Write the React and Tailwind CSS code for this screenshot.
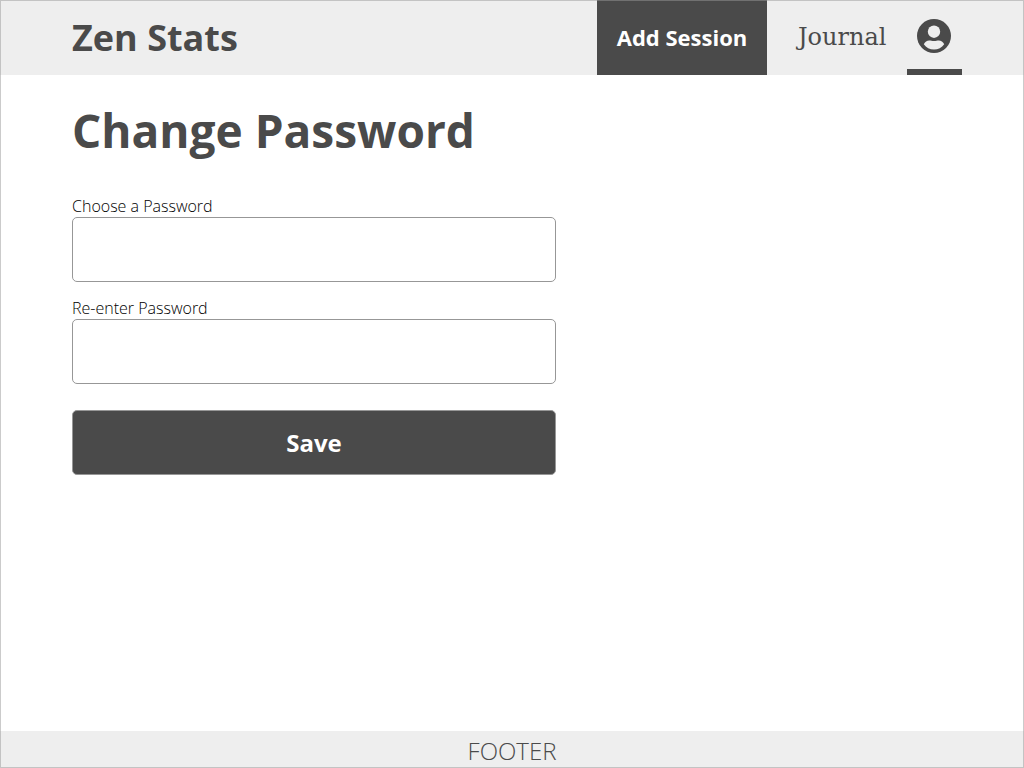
function AccountIcon() {
  return (
    <svg viewBox="0 0 34 34" className="size-[34px]" aria-hidden="true">
      <circle cx="17" cy="17" r="17" fill="#4a4a4a" />
      <circle cx="17" cy="12.7" r="6.2" fill="#eeeeee" />
      <path
        d="M6.8 25.3C7.8 22.8 10 21.4 12.2 21.4C13.8 21.4 15 22 17 22C19 22 20.2 21.4 21.8 21.4C24 21.4 26.2 22.8 27.2 25.3C24.8 28.7 21.2 30.6 17 30.6C12.8 30.6 9.2 28.7 6.8 25.3Z"
        fill="#eeeeee"
      />
    </svg>
  );
}

function Header() {
  return (
    <header className="flex h-[75px] items-stretch bg-[#eeeeee] pr-[62px] pl-[72px] text-[#4a4a4a]">
      <a href="#home" className="flex items-center text-[36px] leading-10 font-bold">
        Zen Stats
      </a>
      <nav className="ml-auto flex items-stretch">
        <a
          href="#add"
          className="flex w-[170px] items-center justify-center bg-[#4a4a4a] text-[22px] font-bold text-white"
        >
          Add Session
        </a>
        <a
          href="#journal"
          className="flex w-[140px] items-center pb-0.5 pl-[31px] font-['DejaVu_Serif',serif] text-[24px]"
        >
          Journal
        </a>
        <a
          href="#account"
          aria-label="Account"
          className="flex w-[55px] items-center justify-center border-b-6 border-[#4a4a4a] pt-0.5 pr-0.5"
        >
          <AccountIcon />
        </a>
      </nav>
    </header>
  );
}

function PasswordField({ id, label }) {
  return (
    <div className="flex flex-col">
      <label htmlFor={id} className="text-[16px] leading-[22px] font-light text-black">
        {label}
      </label>
      <input
        id={id}
        type="password"
        className="h-[65px] w-full rounded-[5px] border border-[#979797] bg-white px-4 text-2xl"
      />
    </div>
  );
}

export default function App() {
  return (
    <div className="relative flex min-h-screen flex-col bg-white font-['Open_Sans',sans-serif] text-[#4a4a4a]">
      <Header />
      <main className="flex-1 px-[72px] pt-6">
        <h1 className="text-[46px] leading-[62px] font-bold">Change Password</h1>
        <form className="mt-[34px] flex w-full max-w-[484px] flex-col gap-[15px]">
          <PasswordField id="password" label="Choose a Password" />
          <PasswordField id="confirm" label="Re-enter Password" />
          <button
            type="button"
            className="mt-[11px] h-[65px] rounded-[5px] border border-[#979797] bg-[#4a4a4a] text-[24px] font-bold text-white"
          >
            Save
          </button>
        </form>
      </main>
      <footer className="flex h-[37px] items-center justify-center bg-[#eeeeee] pt-0.5 text-[24px] font-light">
        FOOTER
      </footer>
      <div className="pointer-events-none absolute inset-0 border border-[#979797]/50" />
    </div>
  );
}
